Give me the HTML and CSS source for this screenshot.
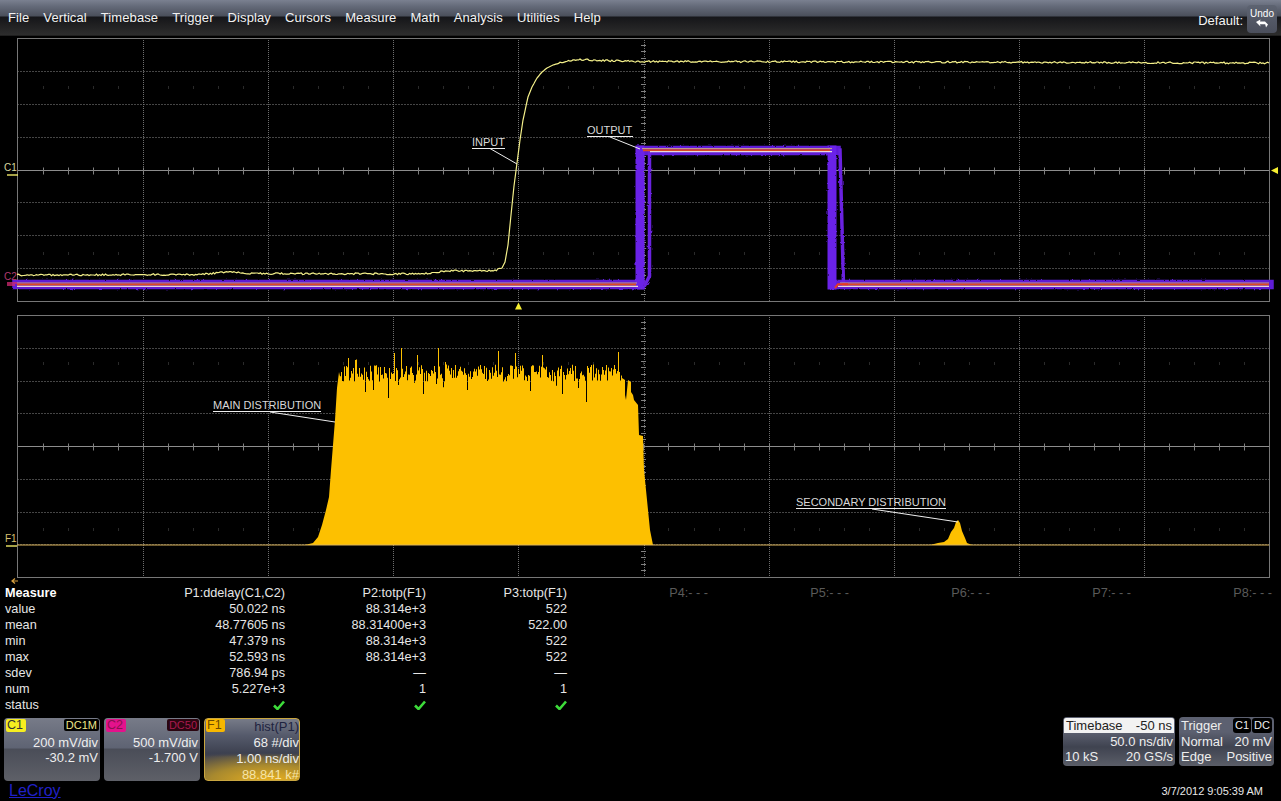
FILE: index.html
```html
<!DOCTYPE html>
<html lang="en">
<head>
<meta charset="utf-8">
<title>LeCroy oscilloscope</title>
<link rel="stylesheet" href="styles.css">
</head>
<body>
<header class="menubar">
  <nav class="menu">
    <span>File</span><span>Vertical</span><span>Timebase</span><span>Trigger</span><span>Display</span><span>Cursors</span><span>Measure</span><span>Math</span><span>Analysis</span><span>Utilities</span><span>Help</span>
  </nav>
  <div class="preset">
    <span class="default">Default:</span>
    <div class="undo">
      <span>Undo</span>
      <svg width="14" height="9" viewBox="0 0 14 9"><path class="undo-arrow" d="M1 3 5.5 .5 5 2.6H10L13 5.5 11 8.5 10.2 5.2H5L5.5 7.5Z"/></svg>
    </div>
  </div>
</header>

<svg class="scope scope-top" viewBox="0 36 1281 279" width="1281" height="279">
  <defs>
    <filter id="rough" x="-5%" y="-5%" width="110%" height="110%">
      <feTurbulence type="fractalNoise" baseFrequency="0.35" numOctaves="2" seed="4"/>
      <feDisplacementMap in="SourceGraphic" scale="2.5"/>
    </filter>
  </defs>
  <g id="grid-top"></g>
  <g class="persist" filter="url(#rough)">
    <path class="band band-l" d="M17 284.5H640"/>
    <path class="band band-l" d="M835 284.5H1269"/>
    <path class="band band-l" d="M641 150.5H836"/>
    <path class="band band-v" d="M640 150V285"/>
    <path class="band band-t" d="M649.5 152V276L645 285"/>
    <path class="band band-v" d="M832 150V285"/>
    <path class="band band-t" d="M840 150 843.5 285"/>
  </g>
  <path class="pale" d="M17 283H637M840 283H1269"/>
  <path class="red" d="M17 284.4H636M842 284.4H1269"/>
  <path class="white" d="M17 286.3H638M838 286.3H1269"/>
  <path class="pale" d="M642 148.6H832"/>
  <path class="red" d="M643 150.2H830"/>
  <path class="white" d="M650 151.7H832"/>
  <path class="red-hook" d="M835 288 838 284.3H848"/>
  <path class="trace-in" id="trace-in"/>
  <path class="leader" d="M472 148.5H505M490 148.5 517 164"/>
  <path class="leader" d="M587 136.5H633M610 137 640 149"/>
  <text class="note" x="472" y="146">INPUT</text>
  <text class="note" x="587" y="134">OUTPUT</text>
  <text class="tag tag-c1" x="4" y="171">C1</text>
  <path class="mark-c1" d="M7 175H18"/>
  <text class="tag tag-c2" x="4" y="280">C2</text>
  <path class="mark-c2" d="M7 283H17M7 285H15"/>
  <path class="tri" d="M1278 167V174L1271 170.5Z"/>
  <path class="tri" d="M515 309.5H522L518.5 302.5Z"/>
</svg>

<svg class="scope scope-bottom" viewBox="0 315 1281 270" width="1281" height="270">
  <g id="grid-bottom"></g>
  <path class="hist" id="hist"/>
  <path class="hist" d="M930 545 938 543 944 542 948 539 951 532 954 528 956 522 958 520 960 523 962 531 965 538 967 543 972 545Z"/>
  <path class="baseline" d="M17 545H1269"/>
  <path class="leader" d="M213 411.5H321M270 412 335 422"/>
  <path class="leader" d="M796 508.5H946M872 509 958 522"/>
  <text class="note" x="213" y="409">MAIN DISTRIBUTION</text>
  <text class="note" x="796" y="506">SECONDARY DISTRIBUTION</text>
  <text class="tag tag-f1" x="5" y="542">F1</text>
  <path class="mark-c1" d="M6 546H17"/>
  <path class="back" d="M18 581H12M15 578.5 12 581 15 583.5"/>
</svg>

<section class="measure">
  <div class="mrow mhead"><b>Measure</b><span>P1:ddelay(C1,C2)</span><span>P2:totp(F1)</span><span>P3:totp(F1)</span><span class="off">P4:- - -</span><span class="off">P5:- - -</span><span class="off">P6:- - -</span><span class="off">P7:- - -</span><span class="off">P8:- - -</span></div>
  <div class="mrow"><i>value</i><span>50.022 ns</span><span>88.314e+3</span><span>522</span></div>
  <div class="mrow"><i>mean</i><span>48.77605 ns</span><span>88.31400e+3</span><span>522.00</span></div>
  <div class="mrow"><i>min</i><span>47.379 ns</span><span>88.314e+3</span><span>522</span></div>
  <div class="mrow"><i>max</i><span>52.593 ns</span><span>88.314e+3</span><span>522</span></div>
  <div class="mrow"><i>sdev</i><span>786.94 ps</span><span>—</span><span>—</span></div>
  <div class="mrow"><i>num</i><span>5.227e+3</span><span>1</span><span>1</span></div>
  <div class="mrow"><i>status</i>
    <span><svg class="ok" width="12" height="10" viewBox="0 0 12 10"><path d="M1 5.5 4.5 9 11 1.5"/></svg></span>
    <span><svg class="ok" width="12" height="10" viewBox="0 0 12 10"><path d="M1 5.5 4.5 9 11 1.5"/></svg></span>
    <span><svg class="ok" width="12" height="10" viewBox="0 0 12 10"><path d="M1 5.5 4.5 9 11 1.5"/></svg></span>
  </div>
</section>

<footer class="dock">
  <div class="dock-left">
    <div class="cards">
      <div class="card">
        <div class="card-head"><span class="chan c1">C1</span><span class="cpl cpl-c1">DC1M</span></div>
        <div class="line">200 mV/div</div>
        <div class="line">-30.2 mV</div>
      </div>
      <div class="card">
        <div class="card-head"><span class="chan c2">C2</span><span class="cpl cpl-c2">DC50</span></div>
        <div class="line">500 mV/div</div>
        <div class="line">-1.700 V</div>
      </div>
      <div class="card card-f1">
        <div class="card-head"><span class="chan f1">F1</span><span class="hist-name">hist(P1)</span></div>
        <div class="line tight">68 #/div</div>
        <div class="line tight">1.00 ns/div</div>
        <div class="line tight gold">88.841 k#</div>
      </div>
    </div>
    <a class="brand">LeCroy</a>
  </div>
  <div class="dock-right">
    <div class="cards">
      <div class="panel panel-time">
        <div class="panel-head"><span>Timebase</span><span>-50 ns</span></div>
        <div class="panel-row panel-end"><span>50.0 ns/div</span></div>
        <div class="panel-row"><span>10 kS</span><span>20 GS/s</span></div>
      </div>
      <div class="panel panel-trig">
        <div class="panel-head"><span>Trigger</span><span class="pills"><em>C1</em><em>DC</em></span></div>
        <div class="panel-row"><span>Normal</span><span>20 mV</span></div>
        <div class="panel-row"><span>Edge</span><span>Positive</span></div>
      </div>
    </div>
    <div class="stamp">3/7/2012 9:05:39 AM</div>
  </div>
</footer>
<script src="app.js"></script>
</body>
</html>
```
FILE: styles.css
```css
* { box-sizing: border-box; }
html, body { margin: 0; padding: 0; }
body {
  width: 1281px; height: 801px; overflow: hidden; background: #000; color: #eee;
  font-family: "Liberation Sans", Arial, sans-serif; font-size: 13px;
  display: flex; flex-direction: column;
}
.menubar {
  height: 36px; flex: none; display: flex; justify-content: space-between; align-items: flex-start;
  background: linear-gradient(#7a8090 0, #656b7a 6px, #4a4f5b 16px, #15161a 17px, #1c1c1e 22px, #2d2d2d 35px, #111 36px);
}
.menu { display: flex; gap: 14px; padding: 10px 0 0 8px; font-size: 13px; line-height: 15px; color: #f2f2f2; letter-spacing: .1px; }
.preset { display: flex; align-items: flex-start; gap: 4px; padding: 5px 4px 0 0; }
.default { font-size: 13px; line-height: 15px; padding-top: 8px; color: #f4f4f4; }
.undo {
  width: 30px; height: 28px; border-radius: 4px; background: linear-gradient(#5d6371, #4b4f5c);
  display: flex; flex-direction: column; align-items: center; font-size: 10px; line-height: 11px; padding-top: 3px; color: #fff;
}
.undo-arrow { fill: #fff; }

.scope { display: block; flex: none; }
.frame { fill: none; stroke: #777; stroke-width: 1; }
.axis { fill: none; stroke: #8c8c8c; stroke-width: 1; }
.dot { fill: none; stroke: #8a8a8a; stroke-width: 1; stroke-dasharray: 1 2; }
.dotv { fill: none; stroke: #6e6e6e; stroke-width: 1; stroke-dasharray: 1 1; }
.tick { fill: none; stroke: #808080; stroke-width: 1; }
.faint { fill: none; stroke: #2a2a2a; stroke-width: 1; }
.band { fill: none; stroke-linecap: square; }
.band-l { stroke: #5f1fd6; stroke-width: 9.5; }
.band-v { stroke: #6a20e8; stroke-width: 9; }
.band-t { stroke: #6a20e0; stroke-width: 3.5; }
.pale { fill: none; stroke: #c9a488; stroke-width: 1; }
.red { fill: none; stroke: #dc4a22; stroke-width: 2; }
.white { fill: none; stroke: #e8d8d8; stroke-width: 1.2; }
.red-hook { fill: none; stroke: #e83a20; stroke-width: 2; }
.trace-in { fill: none; stroke: #f4f08a; stroke-width: 1.2; }
.leader { fill: none; stroke: #eee; stroke-width: 1; }
.note { fill: #d8d8d8; font: 11px "Liberation Sans", Arial, sans-serif; }
.tag { font: 10px "Liberation Sans", Arial, sans-serif; }
.tag-c1 { fill: #d8d8a0; }
.tag-c2 { fill: #b03a70; }
.tag-f1 { fill: #d8c070; }
.mark-c1 { fill: none; stroke: #f0e868; stroke-width: 1.4; }
.mark-c2 { fill: none; stroke: #d02a70; stroke-width: 1.4; }
.tri { fill: #f6ee30; }
.hist { fill: #fdc000; }
.baseline { fill: none; stroke: #dcb45a; stroke-width: 1.2; }
.back { fill: none; stroke: #d8a040; stroke-width: 1.2; }

.measure { flex: none; height: 133px; font-size: 12.7px; line-height: 16px; color: #e6e6e6; }
.mrow { display: grid; grid-template-columns: 139px repeat(8, 141px); padding-left: 5px; height: 16px; }
.mrow span { text-align: right; white-space: nowrap; }
.mrow b { color: #fff; }
.mrow i { font-style: normal; }
.off { color: #5a5a5a; }
.ok { fill: none; stroke: #3ddc3a; stroke-width: 2.6; vertical-align: -1px; }

.dock { flex: 1; display: flex; justify-content: space-between; padding-right: 7px; }
.dock-left, .dock-right { display: flex; flex-direction: column; }
.dock-left { padding-left: 4px; }
.cards { display: flex; gap: 4px; }
.card {
  width: 96px; height: 63px; border-radius: 4px; padding: 1px 1px 0 2px; color: #eee;
  background: linear-gradient(#777b88 0, #5e6373 30px, #4a4d58 31px, #5e6068 100%);
}
.card-head { display: flex; justify-content: space-between; align-items: flex-start; height: 15px; margin-bottom: 1px; }
.chan { font-size: 12.5px; line-height: 13px; padding: 0 3px 0 1px; border-radius: 2px; color: #333; }
.c1 { background: #f6ee20; }
.c2 { background: #e4128c; color: #8a1050; }
.f1 { background: #f8b800; color: #6b4a00; }
.cpl { font-size: 11px; line-height: 12px; padding: 0 2px; border-radius: 2px; background: #000; }
.cpl-c1 { color: #eee58a; }
.cpl-c2 { color: #a81a4e; background: #2a0510; }
.hist-name { color: #1e2340; font-size: 13px; line-height: 15px; }
.line { text-align: right; font-size: 13px; line-height: 15px; padding-right: 1px; white-space: nowrap; }
.card-f1 {
  border: 1px solid #c9a640; padding: 0 0 0 1px;
  background: linear-gradient(#777b88 0, #565b6c 16px, #3d4150 34px, rgba(61,65,80,0) 62%),
    radial-gradient(120px 30px at 70% 100%, #e8b020 0, #a8892e 50%, #3f4150 100%);
}
.tight { line-height: 16px; padding-right: 0; }
.gold { color: #f6e4a8; }
.brand { font-size: 16px; line-height: 18px; color: #2020c8; text-decoration: underline; margin: 1px 0 0 5px; }

.dock-right { margin-top: -1px; }
.panel { height: 49px; border-radius: 4px; font-size: 13px; line-height: 15px; padding: 1px; color: #eee;
  background: linear-gradient(#5c6070 15px, #3f4350 30px, #5b5e68 100%); }
.panel-time { width: 112px; }
.panel-trig { width: 95px; }
.panel-head { display: flex; justify-content: space-between; height: 15px; padding: 0 2px; margin-bottom: 1px; border-radius: 2px 2px 0 0; background: #f2f2f2; color: #222; }
.panel-trig .panel-head { background: transparent; color: #eee; padding: 0 1px; }
.panel-row { display: flex; justify-content: space-between; padding: 0 1px; white-space: nowrap; }
.panel-end { justify-content: flex-end; }
.pills { display: flex; gap: 1px; }
.pills em { font-style: normal; font-size: 11px; line-height: 14px; background: #000; color: #eee; padding: 0 2px; border-radius: 3px; }
.stamp { align-self: flex-end; font-size: 11px; line-height: 13px; margin: 19px 11px 0 0; color: #e8e8e8; white-space: nowrap; }
```
FILE: app.js
```js
(function () {
  var seed = 1729;
  function rnd() {
    seed = (seed + 0x6D2B79F5) | 0;
    var t = Math.imul(seed ^ (seed >>> 15), 1 | seed);
    t = (t + Math.imul(t ^ (t >>> 7), 61 | t)) ^ t;
    return ((t ^ (t >>> 14)) >>> 0) / 4294967296;
  }

  function graticule(id, top, bottom) {
    var h = (bottom - top) / 8, w = 1252 / 10, out = [];
    var L = 17.5, R = 1269.5, cy = Math.round(top + 4 * h) + 0.5, k, i, x, y;
    function add(cls, d) { out.push('<path class="' + cls + '" d="' + d + '"/>'); }
    var dots = '', dotv = '', ticks = '', faint = '';
    for (k = 1; k < 8; k++) {
      if (k === 4) continue;
      y = Math.round(top + k * h) + 0.5;
      dots += 'M' + L + ' ' + y + 'H' + R;
    }
    for (k = 1; k < 10; k++) {
      x = Math.round(L + k * w) + 0.5;
      dotv += 'M' + x + ' ' + top + 'V' + bottom;
    }
    for (x = L + 25; x < R; x += 25.04) {
      var rx = Math.round(x) + 0.5;
      ticks += 'M' + rx + ' ' + (cy - 3) + 'v7';
      faint += 'M' + rx + ' ' + (Math.round(top + 1.45 * h)) + 'v3';
      faint += 'M' + rx + ' ' + (Math.round(top + 6.5 * h)) + 'v3';
    }
    for (i = 1; i < 40; i++) {
      y = Math.round(top + i * h / 5) + 0.5;
      ticks += 'M641 ' + y + 'h5';
    }
    add('faint', faint);
    add('dot', dots);
    add('dotv', dotv);
    add('axis', 'M' + L + ' ' + cy + 'H' + R);
    add('tick', ticks);
    out.push('<rect class="frame" x="' + L + '" y="' + (top + 0.5) + '" width="' + (R - L) + '" height="' + (bottom - top) + '"/>');
    document.getElementById(id).innerHTML = out.join('');
  }
  graticule('grid-top', 38, 301);
  graticule('grid-bottom', 315, 577);

  /* input channel trace */
  var knots = [[17, 275], [200, 274.5], [228, 272], [250, 273.5], [420, 274], [447, 271], [495, 270.5], [502, 268],
    [505, 262], [508, 245], [511, 215], [514, 186], [517, 163], [520, 140], [523, 120], [528, 97], [532, 87],
    [537, 78], [542, 72], [547, 68], [553, 65], [560, 63], [570, 60.5], [580, 59.5], [600, 60.5], [643, 61.5],
    [900, 62], [1269, 63]];
  var d = '', n;
  for (n = 0; n < knots.length - 1; n++) {
    var a = knots[n], b = knots[n + 1], steps = Math.max(1, Math.round((b[0] - a[0]) / 1.5));
    for (var s = 0; s < steps; s++) {
      var t = s / steps, yy = a[1] + (b[1] - a[1]) * t;
      var flat = a[0] < 502 || a[0] >= 560;
      d += (d ? 'L' : 'M') + (a[0] + (b[0] - a[0]) * t).toFixed(1) + ' ' + (yy + (flat ? (rnd() - 0.5) * 1.7 : 0)).toFixed(1);
    }
  }
  document.getElementById('trace-in').setAttribute('d', d + 'L1269 63');

  /* main histogram */
  var spikes = {
    401: 348, 438: 348, 498: 351, 515: 353, 542: 355, 618: 352, 417: 355, 394: 353, 348: 358, 355: 360,
    388: 398, 423: 394, 586: 402, 365: 392, 373: 390, 467: 390, 530: 391, 562: 394, 398: 385, 436: 384, 578: 388
  };
  var h = 'M305 545L313 543L318 537L322 525L326 510L329 497L331 470L333 445L335 420L337 388L339 372';
  for (var x = 340; x <= 621; x++) {
    var y = spikes[x] || (373 + (rnd() - 0.5) * 17 + (rnd() < 0.12 ? (rnd() - 0.5) * 16 : 0));
    h += 'L' + x + ' ' + y.toFixed(1) + 'L' + (x + 1) + ' ' + y.toFixed(1);
  }
  h += 'L622 378L625 380L625 395L626 400L628 380L631 382L631 392L633 395L634 400L638 405L639 435L643 436L644 470L647 500L650 530L653 545Z';
  document.getElementById('hist').setAttribute('d', h);
})();
```
